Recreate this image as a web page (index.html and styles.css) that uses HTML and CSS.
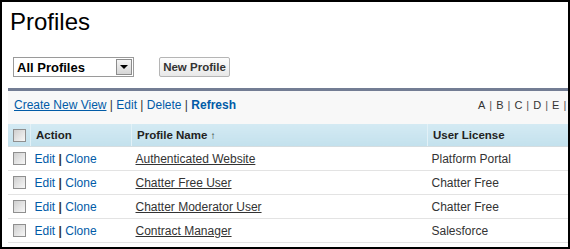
FILE: index.html
```html
<!DOCTYPE html>
<html lang="en">
<head>
    <meta charset="UTF-8">
    <title>Profiles</title>
    <link rel="stylesheet" href="styles.css">
</head>
<body>

    <div class="frame">
        <h1 class="page-title">Profiles</h1>

        <!-- view picker and action button -->
        <div class="view-bar">
            <div class="view-select">
                <span class="view-select-label">All Profiles</span>
                <span class="view-select-arrow"></span>
            </div>
            <button class="btn">New Profile</button>
        </div>

        <div class="list-view">
            <div class="list-links">
                <div class="view-links">
                    <a href="#" class="link underline">Create New View</a>
                    <span class="sep">|</span>
                    <a href="#" class="link">Edit</a>
                    <span class="sep">|</span>
                    <a href="#" class="link">Delete</a>
                    <span class="sep">|</span>
                    <a href="#" class="link bold">Refresh</a>
                </div>
                <div class="alpha">
                    <span>A</span><span class="alpha-sep">|</span><span>B</span><span class="alpha-sep">|</span><span>C</span><span class="alpha-sep">|</span><span>D</span><span class="alpha-sep">|</span><span>E</span><span class="alpha-sep">|</span><span>F</span>
                </div>
            </div>

            <table class="list-table">
                <thead>
                    <tr>
                        <th class="col-check"><span class="checkbox"></span></th>
                        <th class="col-action">Action</th>
                        <th class="col-name">Profile Name <span class="sort">&#8593;</span></th>
                        <th class="col-license">User License</th>
                    </tr>
                </thead>
                <tbody>
                    <tr>
                        <td class="col-check"><span class="checkbox"></span></td>
                        <td><a href="#" class="link">Edit</a> <span class="row-sep">|</span> <a href="#" class="link">Clone</a></td>
                        <td><a href="#" class="name-link">Authenticated Website</a></td>
                        <td>Platform Portal</td>
                    </tr>
                    <tr>
                        <td class="col-check"><span class="checkbox"></span></td>
                        <td><a href="#" class="link">Edit</a> <span class="row-sep">|</span> <a href="#" class="link">Clone</a></td>
                        <td><a href="#" class="name-link">Chatter Free User</a></td>
                        <td>Chatter Free</td>
                    </tr>
                    <tr>
                        <td class="col-check"><span class="checkbox"></span></td>
                        <td><a href="#" class="link">Edit</a> <span class="row-sep">|</span> <a href="#" class="link">Clone</a></td>
                        <td><a href="#" class="name-link">Chatter Moderator User</a></td>
                        <td>Chatter Free</td>
                    </tr>
                    <tr>
                        <td class="col-check"><span class="checkbox"></span></td>
                        <td><a href="#" class="link">Edit</a> <span class="row-sep">|</span> <a href="#" class="link">Clone</a></td>
                        <td><a href="#" class="name-link">Contract Manager</a></td>
                        <td>Salesforce</td>
                    </tr>
                    <tr>
                        <td class="col-check"><span class="checkbox"></span></td>
                        <td><a href="#" class="link">Edit</a> <span class="row-sep">|</span> <a href="#" class="link">Clone</a></td>
                        <td><a href="#" class="name-link">Custom: Marketing Profile</a></td>
                        <td>Salesforce</td>
                    </tr>
                </tbody>
            </table>
        </div>
    </div>

</body>
</html>
```

FILE: styles.css
```css
body {
    margin: 0;
    font-family: "Liberation Sans", Arial, sans-serif;
    color: #333;
    background-color: #fff;
}
.frame {
    width: 570px;
    height: 249px;
    box-sizing: border-box;
    border: 2px solid #000;
    padding: 6px 0 0 6px;
    overflow: hidden;
}
.page-title {
    margin: 0;
    padding-left: 2px;
    font-size: 24px;
    line-height: 28px;
    font-weight: normal;
    color: #000;
}

/* view picker row */
.view-bar {
    display: flex;
    align-items: center;
    gap: 25px;
    margin-top: 21px;
    padding-left: 5px;
}
.view-select {
    display: flex;
    align-items: center;
    justify-content: space-between;
    width: 121px;
    height: 20px;
    box-sizing: border-box;
    border: 1px solid #9a9a9a;
    padding: 0 1px 0 3px;
}
.view-select-label {
    font-size: 13px;
    font-weight: bold;
    color: #000;
}
.view-select-arrow {
    display: flex;
    align-items: center;
    justify-content: center;
    width: 16px;
    height: 16px;
    box-sizing: border-box;
    border: 1px solid #8c8c8c;
    background: linear-gradient(#f4f4f4, #d6d6d6);
}
.view-select-arrow::after {
    content: "";
    border-left: 4px solid transparent;
    border-right: 4px solid transparent;
    border-top: 4px solid #000;
}
.btn {
    width: 71px;
    height: 20px;
    padding: 0;
    border: 1px solid #b5b5b5;
    border-radius: 2px;
    background: linear-gradient(#fdfdfd, #e8e8e8);
    font-family: "Liberation Sans", Arial, sans-serif;
    font-size: 11.5px;
    font-weight: bold;
    color: #333;
}

/* list view */
.list-view {
    width: 640px;
    margin-top: 11px;
    border-top: 3px solid #737d94;
}
.list-links {
    display: flex;
    height: 33px;
    box-sizing: border-box;
    padding: 7px 0 0 6px;
    background-color: #f8f8f8;
    font-size: 12px;
    line-height: 14px;
}
.view-links {
    flex: 0 0 464px;
}
.link {
    color: #015ba7;
    text-decoration: none;
}
.link.underline {
    text-decoration: underline;
}
.link.bold {
    font-weight: bold;
}
.sep {
    color: #333;
}
.alpha {
    font-size: 11px;
    color: #333;
    white-space: nowrap;
}
.alpha-sep {
    margin: 0 4px;
    color: #555;
}

.list-table {
    width: 100%;
    border-collapse: collapse;
    font-size: 12px;
    line-height: 14px;
}
.list-table th {
    height: 22px;
    padding: 0 0 0 5px;
    text-align: left;
    font-size: 11.5px;
    font-weight: bold;
    color: #222;
    background: linear-gradient(#d4eaf3, #c3e1ed);
    border-left: 1px solid #e2f1f7;
    border-bottom: 1px solid #d5dde0;
}
.list-table th:first-child {
    border-left: none;
}
.list-table td {
    height: 23px;
    padding: 0 0 0 4px;
    border-bottom: 1px solid #e3e3e3;
    color: #333;
    white-space: nowrap;
}
.col-check {
    width: 17px;
}
.list-table .col-check {
    padding-left: 5px;
}
.col-action {
    width: 95px;
}
.col-name {
    width: 290px;
}
.sort {
    font-size: 10px;
    font-weight: normal;
}
.row-sep {
    font-weight: bold;
    color: #333;
}
.name-link {
    color: #333;
    text-decoration: underline;
}
.checkbox {
    display: block;
    width: 13px;
    height: 13px;
    box-sizing: border-box;
    border: 1px solid #8f8f8f;
    background: linear-gradient(135deg, #cfcfcf, #f7f7f7);
}
```
